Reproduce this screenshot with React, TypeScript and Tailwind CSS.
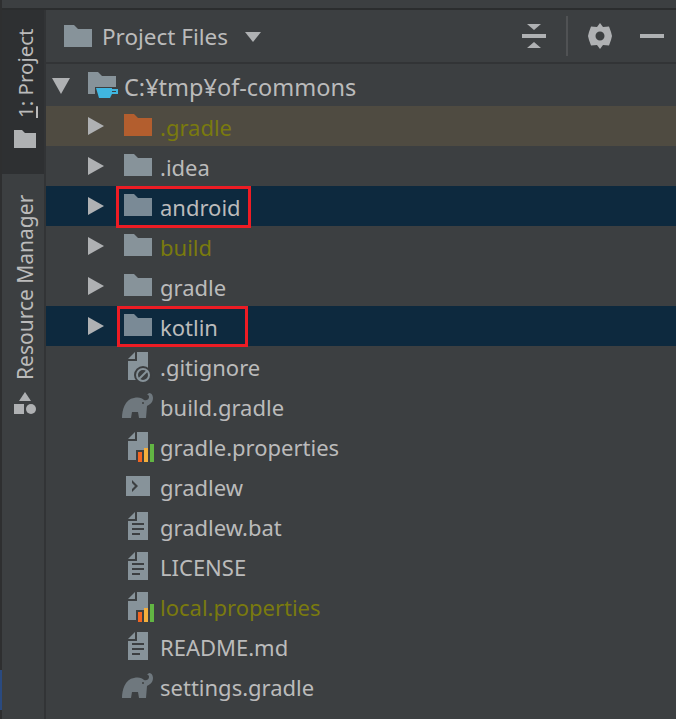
import React from 'react';

const FONT = "font-['Noto_Sans','Open_Sans',sans-serif]";
const OLIVE = 'text-[#7a7a0e]';

const Folder = ({ color = '#87939a' }: { color?: string }) => (
  <svg width="28" height="22" viewBox="0 0 28 22" className="block">
    <path d="M0 0H10L14 4H28V22H0Z" fill={color} />
  </svg>
);

const FolderIcon = ({ color }: { color?: string }) => (
  <svg width="32" height="32" viewBox="0 0 32 32" className="block">
    <path d="M2 4H12L16 8H30V26H2Z" fill={color || '#87939a'} />
  </svg>
);

const RootIcon = () => (
  <svg width="32" height="32" viewBox="0 0 32 32" className="block">
    <path d="M2 2H12L16 6H30V24H2Z" fill="#87939a" />
    <path d="M9 17H31V24H9Z" fill="#3c3f41" />
    <path d="M10 18H26V19H32V24H26L24 28H13Z" fill="#40b6e0" />
    <path d="M26 21H30V22H26Z" fill="#3c3f41" />
  </svg>
);

const Doc = () => (
  <>
    <path d="M15 2H26V30H6V11H15Z" fill="#87939a" />
    <path d="M13 2V9H6Z" fill="#87939a" />
  </>
);

const TextFile = () => (
  <svg width="32" height="32" viewBox="0 0 32 32" className="block">
    <Doc />
    <path d="M10 13H22V15H10ZM10 18H22V20H10ZM10 23H18V25H10Z" fill="#3c3f41" />
  </svg>
);

const IgnoreFile = () => (
  <svg width="32" height="32" viewBox="0 0 32 32" className="block">
    <Doc />
    <circle cx="21" cy="25" r="9" fill="#3c3f41" />
    <circle cx="21" cy="25" r="6" fill="none" stroke="#87939a" strokeWidth="2" />
    <path d="M17 29L25 21" stroke="#87939a" strokeWidth="2" />
  </svg>
);

const PropsFile = () => (
  <svg width="32" height="32" viewBox="0 0 32 32" className="block">
    <Doc />
    <path d="M14 20H26V32H14Z" fill="#3c3f41" />
    <path d="M16 22H20V32H16Z" fill="#f26522" />
    <path d="M22 18H26V32H22Z" fill="#f4af3d" />
    <path d="M26 12H32V32H26Z" fill="#3c3f41" />
    <path d="M28 14H32V32H28Z" fill="#62b543" />
  </svg>
);

const ShellFile = () => (
  <svg width="32" height="32" viewBox="0 0 32 32" className="block">
    <path d="M4 6H28V26H4Z" fill="#87939a" />
    <path d="M10 10L16 16L10 22V19L13 16L10 13Z" fill="#3c3f41" />
  </svg>
);

const Elephant = () => (
  <svg width="32" height="32" viewBox="0 0 32 32" className="block">
    <path
      d="M0 28C0 20 3 9 12 8C17 7 20 8 22 10C25 11 27 9 27 7C27 5 26 5 25 5L27 3C30 3 31 6 31 8C31 13 27 15 25 16L24 28H17L16 22H10L9 28Z"
      fill="#6f787e"
    />
    <circle cx="21" cy="13" r="1" fill="#3c3f41" />
  </svg>
);

const rows: { name: string; icon: React.ReactNode; arrow?: boolean; bg?: string; text?: string; box?: string }[] = [
  { name: '.gradle', icon: <FolderIcon color="#b35e2e" />, arrow: true, bg: 'bg-[#4f4b41]', text: OLIVE },
  { name: '.idea', icon: <FolderIcon />, arrow: true },
  { name: 'android', icon: <FolderIcon color="#7a8a96" />, arrow: true, bg: 'bg-[#0d293e]', box: 'left-[70px] w-[135px] h-[42px]' },
  { name: 'build', icon: <FolderIcon />, arrow: true, text: OLIVE },
  { name: 'gradle', icon: <FolderIcon />, arrow: true },
  { name: 'kotlin', icon: <FolderIcon color="#7a8a96" />, arrow: true, bg: 'bg-[#0d293e]', box: 'left-[71px] w-[131px] h-[41px]' },
  { name: '.gitignore', icon: <IgnoreFile /> },
  { name: 'build.gradle', icon: <Elephant /> },
  { name: 'gradle.properties', icon: <PropsFile /> },
  { name: 'gradlew', icon: <ShellFile /> },
  { name: 'gradlew.bat', icon: <TextFile /> },
  { name: 'LICENSE', icon: <TextFile /> },
  { name: 'local.properties', icon: <PropsFile />, text: OLIVE },
  { name: 'README.md', icon: <TextFile /> },
  { name: 'settings.gradle', icon: <Elephant /> },
];

export default function App() {
  return (
    <div className={`flex h-[719px] w-[676px] overflow-hidden bg-[#3c3f41] ${FONT}`}>
      {/* strip of the window behind */}
      <div className="flex w-[2px] flex-col bg-[#2e2f30]">
        <div className="h-[670px]" />
        <div className="h-[40px] bg-[#2a4a80]" />
      </div>

      <div className="flex min-w-0 flex-1 flex-col">
        <div className="h-[8px] shrink-0" />
        <div className="h-[2px] shrink-0 bg-[#2b2d2e]" />

        <div className="flex min-h-0 flex-1">
          {/* tool window bar */}
          <div className="flex w-[42px] shrink-0 flex-col items-center text-[#bbbbbb]">
            <div className="flex h-[164px] w-full flex-col items-center bg-[#2e3032] pl-[4px] pt-[15px]">
              <span className="h-[93px] rotate-180 whitespace-nowrap text-[20.5px] leading-[24px] [writing-mode:vertical-rl]">
                <u>1</u>: Project
              </span>
              <svg width="22" height="18" viewBox="0 0 22 18" className="mt-[12px] block">
                <path d="M0 0H8L11 3H22V18H0Z" fill="#afb1b3" />
              </svg>
            </div>
            <div className="flex w-full flex-col items-center pl-[4px] pt-[22px]">
              <span className="h-[184px] rotate-180 whitespace-nowrap text-[21px] leading-[24px] [writing-mode:vertical-rl]">
                Resource Manager
              </span>
              <svg width="22" height="22" viewBox="0 0 22 22" className="mt-[12px] block">
                <path d="M11 0L17 9H5Z" fill="#afb1b3" />
                <path d="M0 12H10V22H0Z" fill="#afb1b3" />
                <circle cx="17" cy="17" r="5" fill="#afb1b3" />
              </svg>
            </div>
          </div>
          <div className="w-[2px] shrink-0 bg-[#323436]" />

          {/* project panel */}
          <div className="flex min-w-0 flex-1 flex-col">
            <div className="flex h-[52px] shrink-0 items-center pl-[18px] pr-[12px] text-[#bbbbbb]">
              <Folder />
              <span className="ml-[10px] w-[125px] whitespace-nowrap pt-[2px] text-[22.5px] leading-none">Project Files</span>
              <svg width="16" height="10" viewBox="0 0 16 10" className="ml-[18px] mt-[2px] block">
                <path d="M0 0H16L8 10Z" fill="#afb1b3" />
              </svg>
              <svg width="24" height="24" viewBox="0 0 24 24" className="ml-auto block">
                <path d="M5 0H19L12 6Z M0 10H24V14H0Z M12 18L19 24H5Z" fill="#afb1b3" />
              </svg>
              <div className="ml-[20px] h-[40px] w-[2px] bg-[#505254]" />
              <svg width="26" height="28" viewBox="0 0 26 28" className="ml-[19px] block">
                <path
                  fillRule="evenodd"
                  d="M13 1L16 5L22 4.5L24 10L25 14L24 18L22 23.5L16 23L13 27L10 23L4 23.5L2 18L1 14L2 10L4 4.5L10 5ZM13 9.5A4.5 4.5 0 1 0 13 18.5A4.5 4.5 0 1 0 13 9.5Z"
                  fill="#afb1b3"
                />
              </svg>
              <div className="ml-[27px] h-[4px] w-[24px] bg-[#afb1b3]" />
            </div>
            <div className="h-[2px] shrink-0 bg-[#323436]" />

            <div className="flex flex-col pt-[2px] text-[22px] text-[#bbbbbb]">
              <div className="flex h-[40px] items-center pl-[6px]">
                <svg width="18" height="16" viewBox="0 0 18 16" className="block">
                  <path d="M0 0H18L9 16Z" fill="#afb1b3" />
                </svg>
                <div className="ml-[16px] mr-[6px]">
                  <RootIcon />
                </div>
                <span className="pt-[3px] text-[23.5px] leading-none">C:¥tmp¥of-commons</span>
              </div>

              {rows.map((row) => (
                <div key={row.name} className={`relative flex h-[40px] items-center pl-[42px] ${row.bg || ''}`}>
                  <div className="w-[16px]">
                    {row.arrow && (
                      <svg width="16" height="18" viewBox="0 0 16 18" className="block">
                        <path d="M0 0L16 9L0 18Z" fill="#afb1b3" />
                      </svg>
                    )}
                  </div>
                  <div className="ml-[18px] mr-[6px]">{row.icon}</div>
                  <span className={`pt-[1px] leading-none ${row.text || ''}`}>{row.name}</span>
                  {row.box && <div className={`absolute top-0 border-[3px] border-[#ed1c24] ${row.box}`} />}
                </div>
              ))}
            </div>
          </div>
        </div>
      </div>
    </div>
  );
}
